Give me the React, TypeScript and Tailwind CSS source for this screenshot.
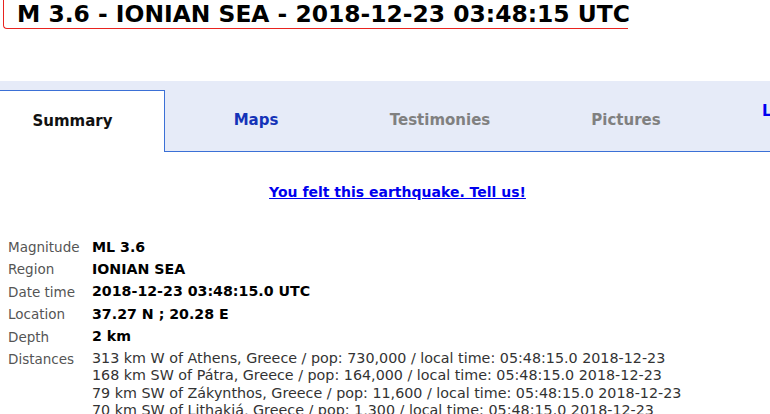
import React from 'react';

const font = { fontFamily: '"DejaVu Sans", Verdana, sans-serif' };

const details: { label: string; value: string }[] = [
  { label: 'Magnitude', value: 'ML 3.6' },
  { label: 'Region', value: 'IONIAN SEA' },
  { label: 'Date time', value: '2018-12-23 03:48:15.0 UTC' },
  { label: 'Location', value: '37.27 N ; 20.28 E' },
  { label: 'Depth', value: '2 km' },
];

const distances = [
  '313 km W of Athens, Greece / pop: 730,000 / local time: 05:48:15.0 2018-12-23',
  '168 km SW of Pátra, Greece / pop: 164,000 / local time: 05:48:15.0 2018-12-23',
  '79 km SW of Zákynthos, Greece / pop: 11,600 / local time: 05:48:15.0 2018-12-23',
  '70 km SW of Lithakiá, Greece / pop: 1,300 / local time: 05:48:15.0 2018-12-23',
];

export default function App() {
  return (
    <div className="h-screen w-screen overflow-hidden bg-white" style={font}>
      {/* title */}
      <div className="ml-[3px] mr-[142px] h-[29px] border-l border-b border-[#e8231f] rounded-bl-[4px] pl-[13px]">
        <h1 className="text-[23.4px] leading-[29px] font-bold text-black whitespace-nowrap">
          M 3.6 - IONIAN SEA - 2018-12-23 03:48:15 UTC
        </h1>
      </div>

      {/* tabs */}
      <div className="mt-[52px] flex h-[71px] w-[1000px] bg-[#e6ebf8] text-[15px] font-bold">
        <div className="mt-[9px] flex w-[165px] items-center justify-center border-t border-r border-[#3b70d6] bg-white pr-[19px] text-[#111]">
          Summary
        </div>
        <div className="flex flex-1 items-end border-b border-[#3b70d6]">
          <div className="flex h-[62px] w-[182px] items-center justify-center text-[#1533b8]">Maps</div>
          <div className="flex h-[62px] w-[186px] items-center justify-center text-[#808080]">Testimonies</div>
          <div className="flex h-[62px] w-[186px] items-center justify-center text-[#808080]">Pictures</div>
          <div className="flex h-[62px] w-[186px] items-center pl-[43px] pb-[18px] text-[#0000f0]">Links</div>
        </div>
      </div>

      {/* felt link */}
      <div className="mt-[30px] flex justify-center pl-[25px]">
        <a href="#" className="text-[14px] font-bold text-[#0000ee] underline">
          You felt this earthquake. Tell us!
        </a>
      </div>

      {/* details */}
      <div className="mt-[33px] pl-[8px]">
        {details.map((d) => (
          <div key={d.label} className="flex h-[22.4px] items-center">
            <div className="w-[84px] text-[13.5px] text-[#555]">{d.label}</div>
            <div className="text-[14.2px] font-bold text-black">{d.value}</div>
          </div>
        ))}
        <div className="flex pt-[2px]">
          <div className="w-[84px] text-[13.5px] leading-[18px] text-[#555]">Distances</div>
          <div className="text-[14.3px] leading-[17.5px] text-[#333] whitespace-nowrap">
            {distances.map((t) => (
              <div key={t}>{t}</div>
            ))}
          </div>
        </div>
      </div>
    </div>
  );
}
